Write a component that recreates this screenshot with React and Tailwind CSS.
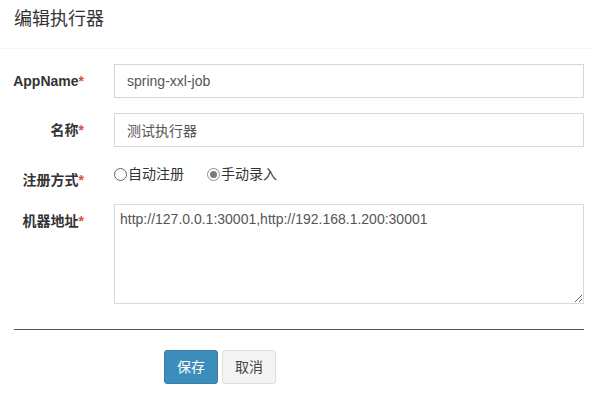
import React from "react";

const Radio = ({ checked, label }) => (
  <label className="flex items-center h-[20px] text-[14px] text-[#333]">
    <svg width="13" height="13" viewBox="0 0 13 13" className="mr-[1px]">
      <circle cx="6.5" cy="6.5" r="6" fill="#fff" stroke={checked ? "#8a8a8a" : "#666"} strokeWidth="1" />
      {checked && <circle cx="6.5" cy="6.5" r="3.5" fill="#7a7a7a" />}
    </svg>
    <span>{label}</span>
  </label>
);

const Label = ({ children, className = "" }) => (
  <div className={`w-[84px] shrink-0 text-right font-bold text-[14px] leading-[20px] text-[#333] ${className}`}>
    {children}
    <span className="text-[#dd4b39]">*</span>
  </div>
);

export default function App() {
  return (
    <div
      className="w-[592px] h-[402px] bg-white overflow-hidden"
      style={{ fontFamily: '"Liberation Sans", "Noto Sans CJK SC", sans-serif' }}
    >
      {/* Modal header */}
      <div className="h-[49px] pl-[14px] pt-[6px] border-b border-[#f4f4f4]">
        <h4 className="text-[18px] leading-[26px] text-[#333] font-normal">编辑执行器</h4>
      </div>

      {/* Form body */}
      <div className="pl-[0px] pr-[8px] pt-[15px]">
        <div className="flex">
          <Label className="pt-[7px]">AppName</Label>
          <input
            className="ml-[30px] w-[470px] h-[34px] border border-[#d2d6de] px-[12px] text-[14px] text-[#555] outline-none"
            defaultValue="spring-xxl-job"
          />
        </div>

        <div className="flex mt-[15px]">
          <Label className="pt-[7px]">名称</Label>
          <input
            className="ml-[30px] w-[470px] h-[34px] border border-[#d2d6de] px-[12px] text-[14px] text-[#555] outline-none"
            defaultValue="测试执行器"
          />
        </div>

        <div className="flex mt-[16px] h-[41px]">
          <Label className="pt-[7px]">注册方式</Label>
          <div className="ml-[30px] flex gap-[23px] pt-[1px]">
            <Radio label="自动注册" />
            <Radio checked label="手动录入" />
          </div>
        </div>

        <div className="flex">
          <Label className="pt-[7px]">机器地址</Label>
          <textarea
            className="ml-[30px] w-[470px] h-[100px] border border-[#d9d9d9] px-[5px] py-[4px] text-[14px] leading-[20px] text-[#555] outline-none"
            defaultValue="http://127.0.0.1:30001,http://192.168.1.200:30001"
          />
        </div>

        <div className="ml-[14px] mt-[25px] border-t border-[#555]" />

        <div className="flex gap-[4px] ml-[164px] mt-[20px]">
          <button className="w-[54px] h-[34px] rounded-[3px] bg-[#3c8dbc] border border-[#367fa9] text-white text-[14px]">
            保存
          </button>
          <button className="w-[54px] h-[34px] rounded-[3px] bg-[#f4f4f4] border border-[#ddd] text-[#444] text-[14px]">
            取消
          </button>
        </div>
      </div>
    </div>
  );
}
